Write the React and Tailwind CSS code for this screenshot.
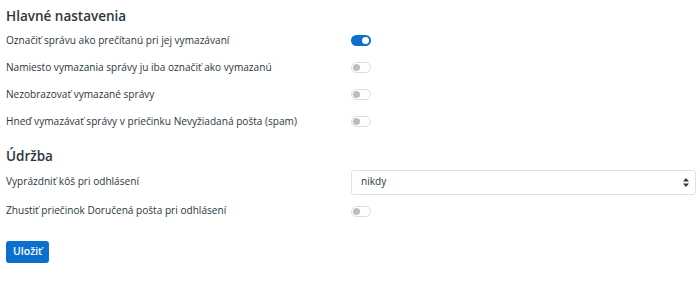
import React from "react";

function Toggle({ on }) {
  return on ? (
    <div className="w-[20px] h-[11px] rounded-full bg-[#0b6fce] flex items-center justify-end pr-[2px]">
      <div className="w-[7px] h-[7px] rounded-full bg-white" />
    </div>
  ) : (
    <div className="w-[20px] h-[11px] rounded-full border border-[#d9dde1] bg-white flex items-center pl-[1px]">
      <div className="w-[7px] h-[7px] rounded-full bg-[#b9bec4]" />
    </div>
  );
}

function Row({ label, children, h = "h-[27px]" }) {
  return (
    <div className={`flex items-center ${h}`}>
      <div className="w-[345px] shrink-0 text-[10.1px] text-[#2c363f]">{label}</div>
      <div className="flex-1 flex items-center">{children}</div>
    </div>
  );
}

export default function App() {
  return (
    <div className="w-[700px] h-[285px] bg-white px-[6px] pt-[5px]" style={{ fontFamily: '"Open Sans", sans-serif' }}>
      <div className="text-[13.5px] font-semibold text-[#2c363f] h-[22px] flex items-center">Hlavné nastavenia</div>
      <div>
        <Row label="Označiť správu ako prečítanú pri jej vymazávaní"><Toggle on /></Row>
        <Row label="Namiesto vymazania správy ju iba označiť ako vymazanú"><Toggle /></Row>
        <Row label="Nezobrazovať vymazané správy"><Toggle /></Row>
        <Row label="Hneď vymazávať správy v priečinku Nevyžiadaná pošta (spam)"><Toggle /></Row>
      </div>
      <div className="text-[13.5px] font-semibold text-[#2c363f] h-[22px] flex items-center mt-[10px]">Údržba</div>
      <Row label="Vyprázdniť kôš pri odhlásení" h="h-[30px]">
        <div className="w-[345px] h-[25px] border border-[#dee2e6] rounded-[3px] flex items-center justify-between pl-[9px] pr-[6px] text-[10.1px] text-[#2c363f]">
          <span>nikdy</span>
          <svg width="6" height="9" viewBox="0 0 6 9"><path d="M3 0L6 3.5H0Z M3 9L0 5.5H6Z" fill="#333" /></svg>
        </div>
      </Row>
      <Row label="Zhustiť priečinok Doručená pošta pri odhlásení" h="h-[28px]"><Toggle /></Row>
      <div className="mt-[12px]">
        <button className="h-[22px] px-[7px] rounded-[3px] bg-[#0b6fce] text-white text-[10.5px] font-semibold">Uložiť</button>
      </div>
    </div>
  );
}
